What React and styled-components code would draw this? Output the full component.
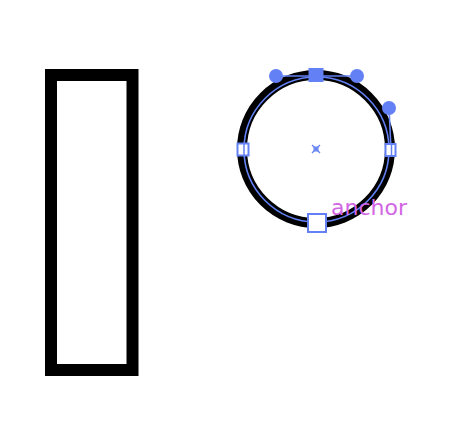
import React from "react";
import styled, { createGlobalStyle } from "styled-components";

const GlobalStyle = createGlobalStyle`
  html, body {
    margin: 0;
    padding: 0;
    background: #ffffff;
  }
`;

const BLUE = "#6381f4";

const Canvas = styled.div`
  position: relative;
  width: 469px;
  height: 439px;
  background: #ffffff;
  overflow: hidden;
`;

const Drawing = styled.svg`
  display: block;
  width: 469px;
  height: 439px;
`;

const Label = styled.span`
  position: absolute;
  left: ${(p) => p.x}px;
  top: ${(p) => p.y}px;
  font-family: "DejaVu Sans", "Liberation Sans", sans-serif;
  font-size: 22px;
  line-height: 1;
  color: #d266e4;
`;

const Handle = ({ cx, cy }) => <circle cx={cx} cy={cy} r="7" fill={BLUE} />;

const Anchor = ({ cx, cy, w, h, filled }) => (
  <rect
    x={cx - w / 2}
    y={cy - h / 2}
    width={w}
    height={h}
    fill={filled ? BLUE : "#ffffff"}
    stroke={BLUE}
    strokeWidth="2"
  />
);

function App() {
  return (
    <Canvas>
      <GlobalStyle />
      <Drawing viewBox="0 0 469 439">
        {/* tall rectangle */}
        <rect x="51" y="75" width="81.5" height="295" fill="none" stroke="#000" strokeWidth="12" />

        {/* circle with its path preview */}
        <circle cx="316" cy="149" r="74" fill="none" stroke="#000" strokeWidth="10" />
        <circle cx="316.5" cy="149.5" r="72.5" fill="none" stroke={BLUE} strokeWidth="1.6" />

        {/* handle lines */}
        <line x1="276" y1="76" x2="357" y2="76" stroke={BLUE} strokeWidth="1.6" />
        <line x1="389" y1="108" x2="391" y2="150" stroke={BLUE} strokeWidth="1.6" />

        <Handle cx={276} cy={76} />
        <Handle cx={357} cy={76} />
        <Handle cx={389} cy={108} />

        <Anchor cx={316} cy={75} w={13} h={12} filled />
        <Anchor cx={243} cy={149.5} w={11} h={12} />
        <line x1="244" y1="143" x2="244" y2="156" stroke={BLUE} strokeWidth="1.5" />
        <Anchor cx={390.5} cy={150} w={10} h={12} />
        <line x1="391.5" y1="144" x2="391.5" y2="156" stroke={BLUE} strokeWidth="1.5" />
        <Anchor cx={317} cy={223} w={18} h={18} />

        {/* center mark */}
        <g stroke={BLUE} strokeWidth="1.2">
          <line x1="312" y1="145" x2="320" y2="153" />
          <line x1="320" y1="145" x2="312" y2="153" />
        </g>
        <rect x="314" y="147" width="4" height="4" fill={BLUE} fillOpacity="0.5" stroke={BLUE} strokeWidth="1" />
      </Drawing>
      <Label x={331} y={197}>anchor</Label>
    </Canvas>
  );
}

export default App;
